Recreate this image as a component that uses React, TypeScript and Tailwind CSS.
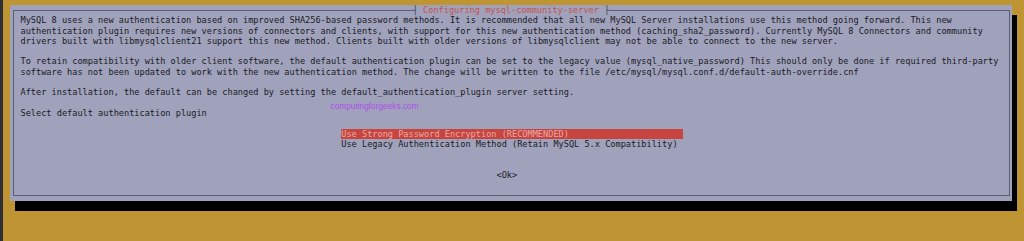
import React from 'react';

const mono = { fontFamily: '"DejaVu Sans Mono", "Liberation Mono", monospace' };

const para1 = [
  'MySQL 8 uses a new authentication based on improved SHA256-based password methods. It is recommended that all new MySQL Server installations use this method going forward. This new',
  'authentication plugin requires new versions of connectors and clients, with support for this new authentication method (caching_sha2_password). Currently MySQL 8 Connectors and community',
  'drivers built with libmysqlclient21 support this new method. Clients built with older versions of libmysqlclient may not be able to connect to the new server.',
];

const para2 = [
  'To retain compatibility with older client software, the default authentication plugin can be set to the legacy value (mysql_native_password) This should only be done if required third-party',
  'software has not been updated to work with the new authentication method. The change will be written to the file /etc/mysql/mysql.conf.d/default-auth-override.cnf',
];

function Blank() {
  return <div className="h-[10.3px]" />;
}

export default function App() {
  return (
    <div className="h-[241px] w-[1024px] overflow-hidden border-l-[3px] border-[#2d2f35] bg-[#bf9432] pl-[7px] pt-[5px]">
      {/* dialog panel with terminal-style drop shadow */}
      <div className="relative h-[196px] w-[1002px] bg-[#9fa2ba] pl-[2.5px] pt-[5px] shadow-[5px_10px_0_0_#000]">
        <div
          className="relative h-[186px] w-[997px] border border-[#5c5e72] pl-[7px] pt-[4.3px] text-[8.6px] leading-[10.3px] text-[#1a1a27]"
          style={mono}
        >
          {/* title over the top border */}
          <div className="absolute -top-[6px] left-1/2 -translate-x-1/2 whitespace-pre bg-[#9fa2ba] text-[#c4524f]">
            <span className="text-[#3a3c4c]">┤</span> Configuring mysql-community-server <span className="text-[#3a3c4c]">├</span>
          </div>

          {para1.map((l) => (
            <div key={l} className="whitespace-pre">{l}</div>
          ))}
          <Blank />
          {para2.map((l) => (
            <div key={l} className="whitespace-pre">{l}</div>
          ))}
          <Blank />
          <div className="whitespace-pre">After installation, the default can be changed by setting the default_authentication_plugin server setting.</div>
          <Blank />
          <div className="whitespace-pre">Select default authentication plugin</div>
          <Blank />
          <div className="ml-[62ch] w-[66ch] whitespace-pre bg-[#c8453f] text-[#e6aaa6]">Use Strong Password Encryption (RECOMMENDED)</div>
          <div className="ml-[62ch] whitespace-pre">Use Legacy Authentication Method (Retain MySQL 5.x Compatibility)</div>
          <Blank />
          <Blank />
          <div className="ml-[92ch] whitespace-pre">&lt;Ok&gt;</div>

          {/* watermark */}
          <div
            className="absolute left-[317px] top-[90px] text-[8.3px] leading-[10px] text-[#b24cf0]"
            style={{ fontFamily: '"Liberation Sans", Arial, sans-serif' }}
          >
            computingforgeeks.com
          </div>
        </div>
      </div>
    </div>
  );
}
